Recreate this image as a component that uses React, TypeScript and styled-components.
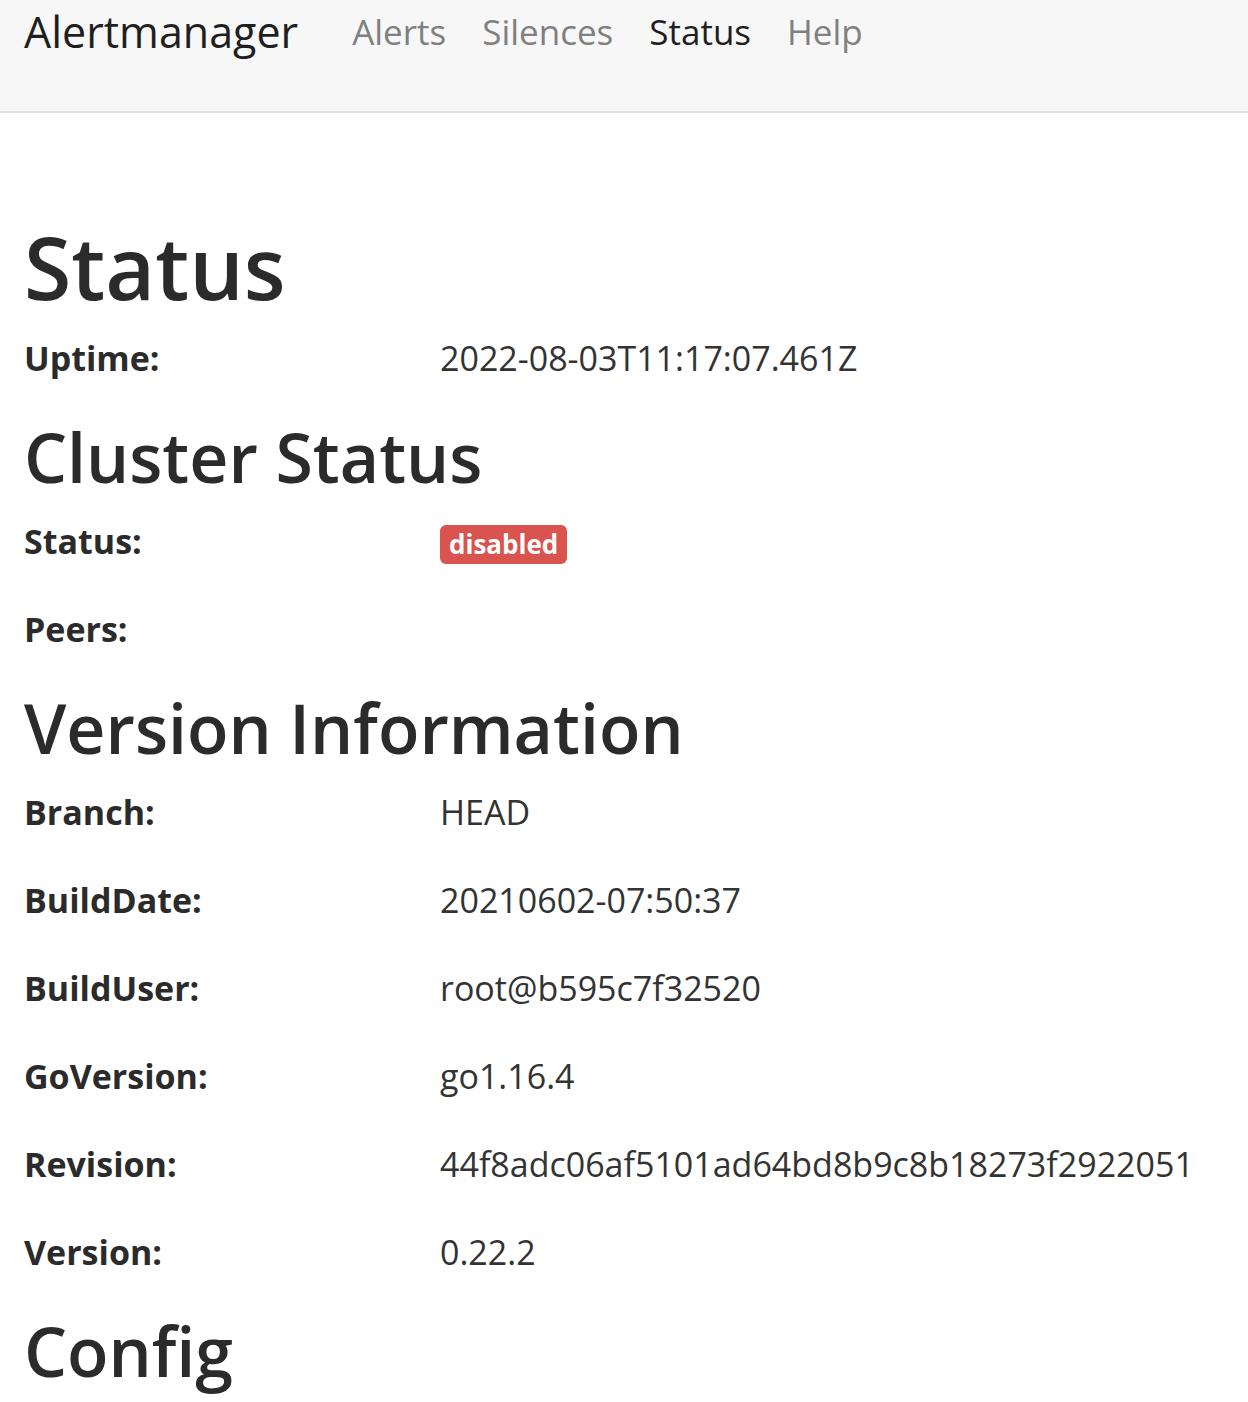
import React from "react";
import styled, { createGlobalStyle } from "styled-components";

const GlobalStyle = createGlobalStyle`
  html, body {
    margin: 0;
    padding: 0;
    background: #fff;
  }
  body {
    font-family: "Open Sans", "Noto Sans", sans-serif;
    color: #292b2c;
  }
`;

const Navbar = styled.nav`
  height: 113px;
  background: #f7f7f7;
  border-bottom: 2px solid #e0e0e0;
  display: flex;
  align-items: flex-start;
  padding: 4px 24px 0;
  box-sizing: border-box;
`;

const Brand = styled.a`
  font-size: 43px;
  color: #1f1f1f;
  line-height: 56px;
  margin-right: 54px;
  text-decoration: none;
`;

const NavLinks = styled.div`
  display: flex;
  gap: 36px;
`;

const NavLink = styled.a<{ $active?: boolean }>`
  font-size: 35px;
  line-height: 56px;
  color: ${(p) => (p.$active ? "#1f1f1f" : "#808080")};
  text-decoration: none;
`;

const Main = styled.main`
  padding: 106px 24px 0;
`;

const PageTitle = styled.h1`
  margin: 0 0 17px;
  font-weight: 600;
  font-size: 86px;
  line-height: 96px;
  color: #2b2b2b;
`;

const Section = styled.h2`
  margin: -8px 0 13px;
  font-weight: 600;
  font-size: 68px;
  line-height: 90px;
  color: #2b2b2b;
`;

const Row = styled.div`
  display: grid;
  grid-template-columns: 416px 1fr;
  height: 88px;
  align-items: start;
  font-size: 34px;
  line-height: 52px;
`;

const Label = styled.div`
  font-weight: 700;
  color: #2b2b2b;
`;

const Value = styled.div`
  color: #333;
`;

const Badge = styled.span`
  display: inline-block;
  background: #d9534f;
  color: #fff;
  font-weight: 700;
  font-size: 26px;
  line-height: 39px;
  padding: 0 9px;
  border-radius: 6px;
`;

const version = [
  ["Branch:", "HEAD"],
  ["BuildDate:", "20210602-07:50:37"],
  ["BuildUser:", "root@b595c7f32520"],
  ["GoVersion:", "go1.16.4"],
  ["Revision:", "44f8adc06af5101ad64bd8b9c8b18273f2922051"],
  ["Version:", "0.22.2"],
];

export default function App() {
  return (
    <>
      <GlobalStyle />
      <Navbar>
        <Brand href="#">Alertmanager</Brand>
        <NavLinks>
          <NavLink href="#">Alerts</NavLink>
          <NavLink href="#">Silences</NavLink>
          <NavLink href="#" $active>
            Status
          </NavLink>
          <NavLink href="#">Help</NavLink>
        </NavLinks>
      </Navbar>
      <Main>
        <PageTitle>Status</PageTitle>
        <Row>
          <Label>Uptime:</Label>
          <Value>2022-08-03T11:17:07.461Z</Value>
        </Row>
        <Section>Cluster Status</Section>
        <Row>
          <Label>Status:</Label>
          <Value>
            <Badge>disabled</Badge>
          </Value>
        </Row>
        <Row>
          <Label>Peers:</Label>
          <Value />
        </Row>
        <Section>Version Information</Section>
        {version.map(([k, v]) => (
          <Row key={k}>
            <Label>{k}</Label>
            <Value>{v}</Value>
          </Row>
        ))}
        <Section>Config</Section>
      </Main>
    </>
  );
}
